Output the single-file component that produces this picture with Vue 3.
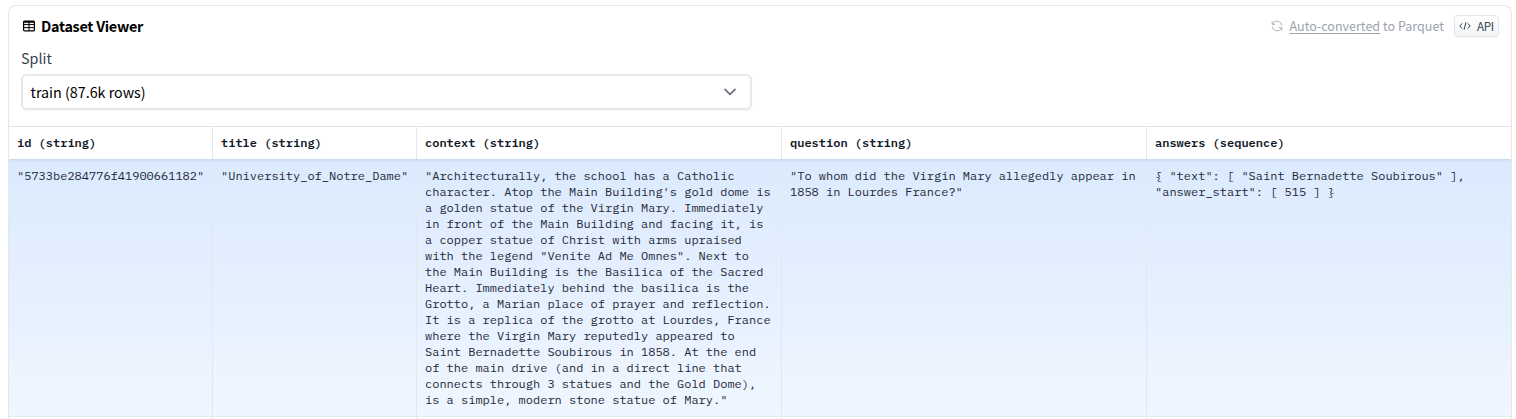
<script setup>
const columns = [
  { name: 'id', type: 'string', value: '"5733be284776f41900661182"' },
  { name: 'title', type: 'string', value: '"University_of_Notre_Dame"' },
  {
    name: 'context',
    type: 'string',
    value:
      '"Architecturally, the school has a Catholic character. Atop the Main Building\'s gold dome is a golden statue of the Virgin Mary. Immediately in front of the Main Building and facing it, is a copper statue of Christ with arms upraised with the legend "Venite Ad Me Omnes". Next to the Main Building is the Basilica of the Sacred Heart. Immediately behind the basilica is the Grotto, a Marian place of prayer and reflection. It is a replica of the grotto at Lourdes, France where the Virgin Mary reputedly appeared to Saint Bernadette Soubirous in 1858. At the end of the main drive (and in a direct line that connects through 3 statues and the Gold Dome), is a simple, modern stone statue of Mary."',
  },
  {
    name: 'question',
    type: 'string',
    value: '"To whom did the Virgin Mary allegedly appear in 1858 in Lourdes France?"',
  },
  {
    name: 'answers',
    type: 'sequence',
    value: '{ "text": [ "Saint Bernadette Soubirous" ], "answer_start": [ 515 ] }',
  },
]
</script>

<template>
  <section class="viewer">
    <header class="bar">
      <svg class="table-icon" viewBox="0 0 12 12" width="12" height="12">
        <rect x="0.6" y="1.1" width="10.8" height="9.8" rx="1" fill="none" stroke="currentColor" stroke-width="1.2" />
        <path d="M.6 1.9h10.8" fill="none" stroke="currentColor" stroke-width="1.8" />
        <path d="M.6 4.6h10.8M.6 7.6h10.8M6 2v9" fill="none" stroke="currentColor" stroke-width="1" />
      </svg>
      <h2 class="title">Dataset Viewer</h2>
      <div class="convert">
        <svg class="sync" viewBox="0 0 12 12" width="12" height="12" fill="none" stroke="currentColor" stroke-width="0.8">
          <path d="M1.1 1.2v3.1h3.1M1.4 4.1A5 5 0 0 1 10.9 5.6M10.9 10.8V7.7H7.8M10.6 7.9A5 5 0 0 1 1.1 6.4" />
        </svg>
        <span class="convert-text"><a>Auto-converted</a> to Parquet</span>
      </div>
      <button class="api">
        <svg viewBox="0 0 12 12" width="12" height="12" fill="none" stroke="currentColor" stroke-width="1">
          <path d="M3.2 3.4L.8 6l2.4 2.6M8.8 3.4L11.2 6 8.8 8.6M6.9 2.3L5.1 9.7" />
        </svg>
        <span class="api-text">API</span>
      </button>
    </header>

    <div class="split">
      <span class="label">Split</span>
      <div class="select">
        <span class="select-text">train (87.6k rows)</span>
        <svg viewBox="0 0 12 8" width="12" height="8">
          <path d="M1 1.3L6 6.3l5-5" fill="none" stroke="#6b7280" stroke-width="1.7" stroke-linecap="round" stroke-linejoin="round" />
        </svg>
      </div>
    </div>

    <div class="grid">
      <div class="row head">
        <div v-for="c in columns" :key="c.name" class="cell">{{ c.name }} ({{ c.type }})</div>
      </div>
      <div class="row data">
        <div v-for="c in columns" :key="c.name" class="cell">{{ c.value }}</div>
      </div>
      <div class="row next">
        <div v-for="c in columns" :key="c.name" class="cell"></div>
      </div>
    </div>
  </section>
</template>

<style>
html,
body {
  background: #fff;
  overflow: hidden;
}
</style>

<style scoped>
.viewer {
  box-sizing: border-box;
  height: 414px;
  margin: 5px 4px 0 8px;
  border: 1px solid #e5e7eb;
  border-bottom: 0;
  border-radius: 8px 8px 0 0;
  overflow: hidden;
  font-family: "Noto Sans CJK SC", "Open Sans", sans-serif;
  white-space: nowrap;
}
.bar {
  display: flex;
  align-items: center;
  height: 40px;
  padding: 0 12px 0 14px;
}
.table-icon {
  margin-right: 6px;
  color: #000;
}
.title {
  margin: 0;
  font-size: 14.4px;
  letter-spacing: -0.28px;
  line-height: 20px;
  font-weight: 700;
  color: #000;
}
.convert {
  display: flex;
  align-items: center;
  margin-left: auto;
  color: #9ca3af;
}
.sync {
  margin-right: 6px;
}
.convert-text {
  font-size: 12.55px;
  line-height: 20px;
}
.convert-text a {
  text-decoration: underline;
  text-decoration-thickness: 1px;
  text-underline-offset: 2px;
}
.api {
  box-sizing: border-box;
  display: flex;
  align-items: center;
  width: 45px;
  height: 22px;
  margin-left: 10px;
  padding: 0 5px 0 4px;
  border: 1px solid #e5e7eb;
  border-radius: 4px;
  background: linear-gradient(#fff, #f3f4f6);
  color: #374151;
  font-family: inherit;
  box-shadow: 0 1px 2px rgba(0, 0, 0, 0.04);
}
.api svg {
  flex: none;
  margin-right: 6px;
}
.api-text {
  padding-bottom: 1px;
  font-size: 11.6px;
  letter-spacing: -0.3px;
  line-height: 18px;
}
.split {
  display: flex;
  flex-direction: column;
  height: 80px;
  padding: 0 12px;
}
.label {
  height: 24px;
  margin-bottom: 4px;
  font-size: 14.3px;
  line-height: 24px;
  color: #374151;
}
.select {
  box-sizing: border-box;
  display: flex;
  align-items: center;
  justify-content: space-between;
  width: 731px;
  height: 36px;
  padding: 0 14px 0 7.5px;
  border: 2px solid #e5e7eb;
  border-radius: 6px;
  box-shadow: 0 1px 2px rgba(0, 0, 0, 0.05);
}
.select-text {
  font-size: 14.3px;
  line-height: 24px;
  color: #000;
}
.grid {
  border-top: 1px solid #e5e7eb;
  font-family: "IBM Plex Mono", "Liberation Mono", monospace;
  font-size: 12px;
  line-height: 16px;
  white-space: normal;
}
.row {
  display: grid;
  grid-template-columns: 204px 204px 365px 365px 364px;
}
.cell {
  box-sizing: border-box;
  padding: 8px;
  border-right: 1px solid #e5e7eb;
}
.cell:last-child {
  border-right: 0;
}
.head {
  position: relative;
  height: 32px;
  color: #111827;
  font-weight: 600;
  box-shadow: 0 1px 3px rgba(0, 0, 0, 0.1);
}
.data {
  height: 258px;
  box-sizing: border-box;
  border-bottom: 1px solid #e5e7eb;
  background: linear-gradient(#dbeafe, #eff6ff);
  color: #1f2937;
}
.data .cell {
  padding-top: 9px;
}
.next {
  height: 20px;
}
</style>
